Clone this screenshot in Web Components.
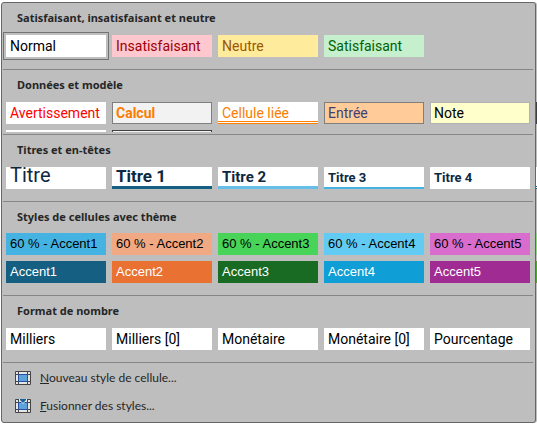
<!DOCTYPE html>
<html lang="fr">
<head>
<meta charset="utf-8">
<title>Styles de cellules</title>
<style>
    body {
        margin: 0;
        padding: 2px 1px 1px;
        background: #fff;
        font-family: Roboto, "Liberation Sans", sans-serif;
    }

    .calc { --bg: #f2f2f2; --fg: #fa7d00; --edge: #7f7f7f; --weight: 700; }
    .output { --bg: #f2f2f2; --fg: #3f3f3f; --edge: #3f3f3f; }
    .check { --bg: #a5a5a5; --edge: #3f3f3f; }
    .input { --bg: #ffcc99; --fg: #3f3f76; --edge: #7f7f7f; }
    .note { --bg: #ffffcc; --edge: #b2b2b2; }
    .title { --fg: #0e2841; }
    .heading { --fg: #0e2841; --weight: 700; }
    .accents { font-family: "Liberation Sans", sans-serif; --size: 13px; }
</style>
</head>
<body>

<style-gallery>
    <style-section heading="Satisfaisant, insatisfaisant et neutre">
        <style-cell selected>Normal</style-cell>
        <style-cell style="--bg:#ffc7ce; --fg:#9c0006">Insatisfaisant</style-cell>
        <style-cell style="--bg:#ffeb9c; --fg:#9c5700">Neutre</style-cell>
        <style-cell style="--bg:#c6efce; --fg:#006100">Satisfaisant</style-cell>
    </style-section>

    <style-section heading="Données et modèle" clipped>
        <style-cell style="--fg:#ff0000">Avertissement</style-cell>
        <style-cell class="calc">Calcul</style-cell>
        <style-cell style="--fg:#fa7d00; --rule:3px double #ff8001">Cellule liée</style-cell>
        <style-cell class="input">Entrée</style-cell>
        <style-cell class="note">Note</style-cell>
        <style-cell class="check" inert></style-cell>
        <style-cell inert></style-cell>
        <style-cell class="output" inert></style-cell>
    </style-section>

    <style-section heading="Titres et en-têtes">
        <style-cell class="title" style="--size:20px; --line:16px">Titre</style-cell>
        <style-cell class="heading" style="--size:17px; --line:18px; --rule:3px solid #156082">Titre 1</style-cell>
        <style-cell class="heading" style="--size:15px; --line:20px; --rule:3px solid #67bfe9">Titre 2</style-cell>
        <style-cell class="heading" style="--size:13px; --rule:2px solid #44b3e1">Titre 3</style-cell>
        <style-cell class="heading" style="--size:13px">Titre 4</style-cell>
        <style-cell style="--rule:3px double #156082" inert></style-cell>
    </style-section>

    <style-section class="accents" heading="Styles de cellules avec thème" tight>
        <style-cell style="--bg:#44b3e1">60 % - Accent1</style-cell>
        <style-cell style="--bg:#f1a983">60 % - Accent2</style-cell>
        <style-cell style="--bg:#47d459">60 % - Accent3</style-cell>
        <style-cell style="--bg:#61cbf3">60 % - Accent4</style-cell>
        <style-cell style="--bg:#d86dcd">60 % - Accent5</style-cell>
        <style-cell style="--bg:#8ed973" inert></style-cell>
        <style-cell style="--bg:#156082; --fg:#fff">Accent1</style-cell>
        <style-cell style="--bg:#e97132; --fg:#fff">Accent2</style-cell>
        <style-cell style="--bg:#196b24; --fg:#fff">Accent3</style-cell>
        <style-cell style="--bg:#0f9ed5; --fg:#fff">Accent4</style-cell>
        <style-cell style="--bg:#a02b93; --fg:#fff">Accent5</style-cell>
        <style-cell style="--bg:#4ea72e" inert></style-cell>
    </style-section>

    <style-section heading="Format de nombre">
        <style-cell>Milliers</style-cell>
        <style-cell>Milliers [0]</style-cell>
        <style-cell>Monétaire</style-cell>
        <style-cell>Monétaire [0]</style-cell>
        <style-cell>Pourcentage</style-cell>
    </style-section>

    <style-command slot="commands" icon="new" key="N">ouveau style de cellule...</style-command>
    <style-command slot="commands" icon="merge" key="F">usionner des styles...</style-command>
</style-gallery>

<script>
class StyleGallery extends HTMLElement {
    constructor() {
        super();
        this.attachShadow({ mode: 'open' });
    }

    connectedCallback() {
        this.shadowRoot.innerHTML = `
            <style>
                :host {
                    display: block;
                    background: #bebebe;
                    border: 1px solid #666;
                    border-radius: 3px;
                    box-shadow: 1px 0 #bebebe;
                }

                .commands {
                    display: flex;
                    flex-direction: column;
                    padding: 1px 0 2px;
                }
            </style>
            <slot></slot>
            <div class="commands"><slot name="commands"></slot></div>
        `;
    }
}

class StyleSection extends HTMLElement {
    constructor() {
        super();
        this.attachShadow({ mode: 'open' });
    }

    connectedCallback() {
        this.shadowRoot.innerHTML = `
            <style>
                :host {
                    display: block;
                }

                h2 {
                    margin: 0;
                    padding-left: 15px;
                    font: 700 11px/30px "Noto Sans", "Open Sans", sans-serif;
                    color: #262626;
                    height: 32px;
                }

                :host([tight]) h2 {
                    height: 31px;
                }

                /* The sixth column only peeks out past the panel border */
                .cells {
                    display: grid;
                    grid-template-columns: repeat(5, minmax(0, 1fr)) 1px;
                    grid-auto-rows: 22px;
                    gap: 6px;
                    margin: 0 -2px 12px 4px;
                }

                /* Second row is cut just under its top edge */
                :host([clipped]) .cells {
                    grid-template-rows: 22px 2px;
                    margin-bottom: 2px;
                    overflow: hidden;
                }

                hr {
                    height: 1px;
                    margin: 0 2px 0 1px;
                    border: 0;
                    background: #868686;
                }
            </style>
            <h2>${this.getAttribute('heading')}</h2>
            <div class="cells"><slot></slot></div>
            <hr>
        `;
    }
}

class StyleCell extends HTMLElement {
    constructor() {
        super();
        this.attachShadow({ mode: 'open' });
    }

    connectedCallback() {
        this.shadowRoot.innerHTML = `
            <style>
                :host {
                    display: block;
                    min-width: 0;
                    overflow: hidden;
                }

                :host([selected]) {
                    overflow: visible;
                    outline: 1px solid #737373;
                    outline-offset: 2px;
                }

                button {
                    display: flex;
                    align-items: flex-start;
                    box-sizing: border-box;
                    width: 100%;
                    height: 22px;
                    margin: 0;
                    padding: 0 0 0 4px;
                    border: 0;
                    border-bottom: var(--rule, 0 solid);
                    border-radius: 0;
                    box-shadow: inset 0 0 0 1px var(--edge, transparent);
                    background: var(--bg, #fff);
                    color: var(--fg, #000);
                    font-family: inherit;
                    font-size: var(--size, 14px);
                    font-weight: var(--weight, 400);
                    line-height: var(--line, 22px);
                    white-space: nowrap;
                    overflow: hidden;
                }

                :host([inert]) button {
                    padding: 0;
                }
            </style>
            <button type="button"><slot></slot></button>
        `;
    }
}

const ICON_GRID = `
    <path d="M.5 .5h15v13h-15z" fill="#e6e6e6" stroke="#444"/>
    <path d="M3.5 1v12M12.5 1v12M1 3.5h14M1 10.5h14" stroke="#444" fill="none"/>
    <path d="M3.5 3.5h9v7h-9z" fill="#5ba3d9" stroke="#2b4fa0"/>
`;

const ICONS = {
    new: ICON_GRID,
    merge: `${ICON_GRID}
        <path d="M4 0h8v1l-4 4-4-4z" fill="#e6e6e6"/>
        <path d="M5 0h6v1L8 4 5 1z" fill="#1464a0"/>
    `
};

class StyleCommand extends HTMLElement {
    constructor() {
        super();
        this.attachShadow({ mode: 'open' });
    }

    connectedCallback() {
        this.shadowRoot.innerHTML = `
            <style>
                :host {
                    display: block;
                }

                button {
                    display: flex;
                    align-items: center;
                    gap: 9px;
                    width: 100%;
                    height: 28px;
                    margin: 0;
                    padding: 0 0 0 13px;
                    border: 0;
                    background: none;
                    color: #262626;
                    font: 12px/28px Lato, "Open Sans", sans-serif;
                    text-align: left;
                }

                svg {
                    width: 16px;
                    height: 14px;
                    flex-shrink: 0;
                }
            </style>
            <button type="button">
                <svg viewBox="0 0 16 14" aria-hidden="true">${ICONS[this.getAttribute('icon')]}</svg>
                <span><u>${this.getAttribute('key')}</u><slot></slot></span>
            </button>
        `;
    }
}

customElements.define('style-gallery', StyleGallery);
customElements.define('style-section', StyleSection);
customElements.define('style-cell', StyleCell);
customElements.define('style-command', StyleCommand);
</script>
</body>
</html>
